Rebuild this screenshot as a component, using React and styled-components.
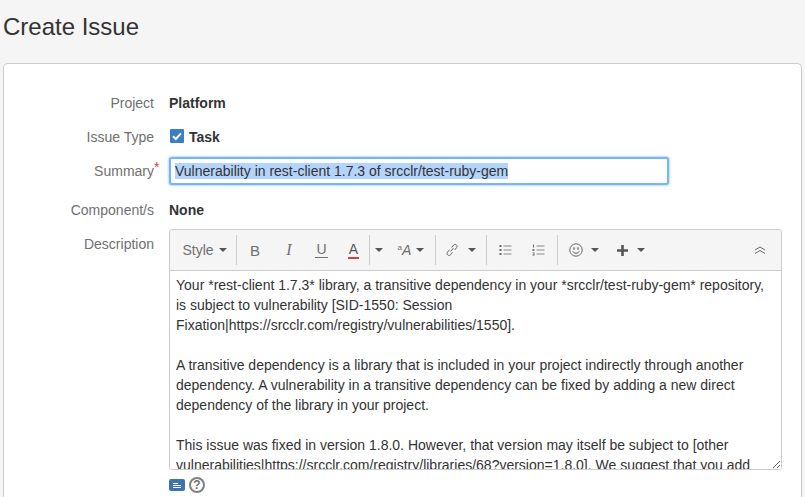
import React from "react";
import styled, { createGlobalStyle } from "styled-components";

const GlobalStyle = createGlobalStyle`
  html, body {
    margin: 0;
    height: 497px;
    overflow: hidden;
    background: #f5f5f5;
    font-family: "Liberation Sans", Arial, sans-serif;
    font-size: 14px;
    color: #333;
  }
`;

const Caret = () => (
  <CaretIcon viewBox="0 0 8 4" aria-hidden="true">
    <path d="M0 0h8L4 4z" fill="currentColor" />
  </CaretIcon>
);

export default function App() {
  return (
    <Page>
      <GlobalStyle />
      <Title>Create Issue</Title>
      <Card>
        <Row $height={34}>
          <Label>Project</Label>
          <Value>Platform</Value>
        </Row>
        <Row $height={34}>
          <Label>Issue Type</Label>
          <Value>
            <TypeIcon viewBox="0 0 14 14" aria-hidden="true">
              <rect width="14" height="14" rx="1" fill="#3b7fc4" />
              <path d="M3 7.3l2.8 2.7L11 4.4" fill="none" stroke="#fff" strokeWidth="2" />
            </TypeIcon>
            Task
          </Value>
        </Row>
        <Row $height={39}>
          <Label>
            Summary<Required>*</Required>
          </Label>
          <SummaryBox>
            <Selected>Vulnerability in rest-client 1.7.3 of srcclr/test-ruby-gem</Selected>
          </SummaryBox>
        </Row>
        <Row $height={34}>
          <Label>Component/s</Label>
          <Value>None</Value>
        </Row>
        <DescriptionRow>
          <DescriptionLabel>Description</DescriptionLabel>
          <DescriptionField>
            <Editor>
              <Toolbar>
                <ToolButton $width={63}>
                  Style <Caret />
                </ToolButton>
                <Separator />
                <ToolButton $width={36}>
                  <LetterMark>B</LetterMark>
                </ToolButton>
                <ToolButton $width={32}>
                  <ItalicMark>I</ItalicMark>
                </ToolButton>
                <ToolButton $width={33}>
                  <UnderlineMark>U</UnderlineMark>
                </ToolButton>
                <ToolButton $width={31}>
                  <ColorMark>A</ColorMark>
                </ToolButton>
                <Separator />
                <ToolButton $width={17}>
                  <Caret />
                </ToolButton>
                <ToolButton $width={48}>
                  <SizeMark>
                    <sup>a</sup>A
                  </SizeMark>
                  <Caret />
                </ToolButton>
                <Separator />
                <ToolButton $width={50} $gap={10}>
                  <LinkIcon viewBox="0 0 12 14" aria-hidden="true">
                    <path
                      d="M4.600 8.500l3-3.600M3.500 6.700L1.500 9.300c-1.600 2.100 1.500 4.400 3.100 2.400L6.500 9.300M5.600 4.600L7.600 2.100c1.600-2 4.600.3 3 2.400L8.700 7"
                      fill="none"
                      stroke="#666"
                      strokeWidth="1"
                    />
                  </LinkIcon>
                  <Caret />
                </ToolButton>
                <Separator />
                <ToolButton $width={37}>
                  <ListIcon viewBox="0 0 13 12" aria-hidden="true">
                    <path d="M4.500 2h8M4.500 6h8M4.500 10h8" stroke="#8a8a8a" strokeWidth="1" />
                    <path d="M.5 1h2v2h-2zM.5 5h2v2h-2zM.5 9h2v2h-2z" fill="#666" />
                  </ListIcon>
                </ToolButton>
                <ToolButton $width={33} $pad={5}>
                  <ListIcon viewBox="0 0 13 12" aria-hidden="true">
                    <path d="M4.500 2h8M4.500 6h8M4.500 10h8" stroke="#8a8a8a" strokeWidth="1" />
                    <path d="M1 .5h1v3H1zM.5 5h2v.8H1.400v.4h1.100V7H.5zM.5 8.500h2v3h-2v-.7h1.200v-.4H.9v-.5h.8v-.7H.5z" fill="#666" />
                  </ListIcon>
                </ToolButton>
                <Separator />
                <ToolButton $width={51} $gap={8}>
                  <SmileIcon viewBox="0 0 14 14" aria-hidden="true">
                    <circle cx="7" cy="7" r="6.200" fill="none" stroke="#666" strokeWidth="1" />
                    <path d="M5 4.200v2.600M9 4.200v2.600" stroke="#555" strokeWidth="1.200" />
                    <path d="M3.800 8.400c1.400 2.400 5 2.400 6.400 0" fill="none" stroke="#555" strokeWidth="1" />
                  </SmileIcon>
                  <Caret />
                </ToolButton>
                <ToolButton $width={44} $gap={9}>
                  <PlusIcon viewBox="0 0 11 11" aria-hidden="true">
                    <path d="M4.200 0h2.600v4.200H11v2.600H6.800V11H4.200V6.800H0V4.200h4.200z" fill="#555" />
                  </PlusIcon>
                  <Caret />
                </ToolButton>
                <CollapseButton>
                  <CollapseIcon viewBox="0 0 12 10" aria-hidden="true">
                    <path d="M1 5l5-3 5 3M1 8.500l5-3 5 3" fill="none" stroke="#666" strokeWidth="1" />
                  </CollapseIcon>
                </CollapseButton>
              </Toolbar>
              <TextArea
                readOnly
                value={`Your *rest-client 1.7.3* library, a transitive dependency in your *srcclr/test-ruby-gem* repository, is subject to vulnerability [SID-1550: Session Fixation|https://srcclr.com/registry/vulnerabilities/1550].

A transitive dependency is a library that is included in your project indirectly through another dependency. A vulnerability in a transitive dependency can be fixed by adding a new direct dependency of the library in your project.

This issue was fixed in version 1.8.0. However, that version may itself be subject to [other vulnerabilities|https://srcclr.com/registry/libraries/68?version=1.8.0]. We suggest that you add`}
              />
            </Editor>
            <HelpRow>
              <ModeIcon viewBox="0 0 16 12" aria-hidden="true">
                <rect width="16" height="12" rx="2" fill="#3d74ad" />
                <path d="M4 4.500h5M4 6.500h8M4 8.500h8" stroke="#fff" strokeWidth="1" />
              </ModeIcon>
              <HelpIcon>?</HelpIcon>
            </HelpRow>
          </DescriptionField>
        </DescriptionRow>
      </Card>
    </Page>
  );
}

const Page = styled.div`
  padding: 0 3px;
`;

const Title = styled.h1`
  margin: 0;
  padding-top: 12px;
  height: 63px;
  box-sizing: border-box;
  font-size: 24px;
  line-height: 30px;
  font-weight: 400;
  color: #333;
`;

const Card = styled.div`
  box-sizing: border-box;
  width: 799px;
  height: 434px;
  padding: 22px 0 0;
  background: #fff;
  border: 1px solid #ccc;
  border-bottom: 0;
  border-radius: 5px 5px 0 0;
`;

const Row = styled.div`
  display: flex;
  align-items: flex-start;
  height: ${(props) => props.$height}px;
  line-height: 34px;
`;

const Label = styled.div`
  flex: none;
  width: 150px;
  height: 34px;
  padding-right: 15px;
  text-align: right;
  color: #707070;
  position: relative;
`;

const Required = styled.span`
  position: absolute;
  left: 150px;
  top: -4px;
  color: #d04437;
`;

const Value = styled.div`
  display: flex;
  align-items: center;
  height: 34px;
  font-weight: 700;
`;

const TypeIcon = styled.svg`
  width: 14px;
  height: 14px;
  margin: -3px 5px 0 1px;
`;

const SummaryBox = styled.div`
  box-sizing: border-box;
  width: 500px;
  height: 28px;
  margin-top: 3px;
  padding: 0 4px;
  display: flex;
  align-items: center;
  background: #fff;
  border: 2px solid #78b4fa;
  border-radius: 3px;
  box-shadow: 0 0 2px 1px #bcdcfd;
`;

const Selected = styled.span`
  line-height: 16px;
  background: #b3d4fc;
`;

const DescriptionRow = styled.div`
  display: flex;
  align-items: flex-start;
`;

const DescriptionLabel = styled(Label)`
  margin-top: 9px;
`;

const DescriptionField = styled.div`
  width: 613px;
  margin-top: 2px;
`;

const Editor = styled.div`
  box-sizing: border-box;
  height: 241px;
  display: flex;
  flex-direction: column;
  border: 1px solid #ccc;
  border-radius: 3px;
  overflow: hidden;
`;

const Toolbar = styled.div`
  flex: none;
  display: flex;
  align-items: center;
  height: 41px;
  padding-left: 3px;
  box-sizing: border-box;
  background: #f5f5f5;
  border-bottom: 1px solid #ccc;
  color: #707070;
`;

const ToolButton = styled.div`
  flex: none;
  box-sizing: border-box;
  width: ${(props) => props.$width}px;
  padding-right: ${(props) => props.$pad || 0}px;
  display: flex;
  align-items: center;
  justify-content: center;
  gap: ${(props) => props.$gap || 5}px;
`;

const Separator = styled.div`
  flex: none;
  width: 1px;
  height: 30px;
  background: #ccc;
`;

const CaretIcon = styled.svg`
  width: 8px;
  height: 4px;
  color: #555;
`;

const LetterMark = styled.span`
  font-size: 15px;
`;

const ItalicMark = styled.span`
  font-family: "Liberation Serif", serif;
  font-style: italic;
  font-size: 16px;
`;

const UnderlineMark = styled.span`
  border-bottom: 1px solid #707070;
  line-height: 15px;
  padding: 0 1px;
`;

const ColorMark = styled.span`
  border-bottom: 2px solid #d04437;
  line-height: 15px;
  padding: 0 1px;
  color: #555;
`;

const SizeMark = styled.span`
  font-style: italic;
  font-size: 14px;
  sup {
    font-size: 8px;
    font-style: normal;
    vertical-align: 5px;
    line-height: 0;
  }
`;

const LinkIcon = styled.svg`
  width: 12px;
  height: 14px;
`;

const ListIcon = styled.svg`
  width: 13px;
  height: 12px;
`;

const SmileIcon = styled.svg`
  width: 14px;
  height: 14px;
`;

const PlusIcon = styled.svg`
  width: 11px;
  height: 11px;
`;

const CollapseIcon = styled.svg`
  width: 12px;
  height: 10px;
`;

const CollapseButton = styled.div`
  margin-left: auto;
  margin-right: 15px;
  display: flex;
`;

const TextArea = styled.textarea`
  flex: 1;
  display: block;
  margin: 0;
  padding: 4px 6px;
  border: 0;
  outline: 0;
  overflow: hidden;
  resize: vertical;
  font-family: inherit;
  font-size: 14px;
  line-height: 20px;
  color: #333;
`;

const HelpRow = styled.div`
  display: flex;
  align-items: center;
  gap: 4px;
  padding-top: 7px;
`;

const ModeIcon = styled.svg`
  width: 16px;
  height: 12px;
`;

const HelpIcon = styled.span`
  box-sizing: border-box;
  width: 16px;
  height: 16px;
  display: flex;
  align-items: center;
  justify-content: center;
  border: 2px solid #808080;
  border-radius: 50%;
  font-size: 12px;
  font-weight: 700;
  color: #707070;
`;
